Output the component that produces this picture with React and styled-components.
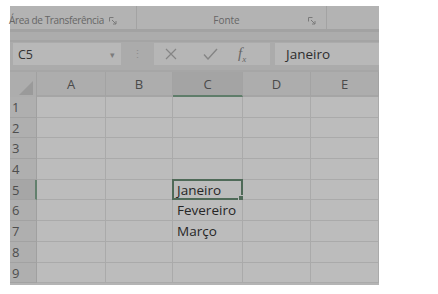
import React from 'react'
import styled, { createGlobalStyle } from 'styled-components'

const GlobalStyle = createGlobalStyle`
    body {
        margin: 0;
        background: #ffffff;
        font-family: "Open Sans", "Noto Sans", sans-serif;
    }
`;

const columns = ['A', 'B', 'C', 'D', 'E'];
const colWidths = [69, 67, 70, 68, 68];
const rows = [1, 2, 3, 4, 5, 6, 7, 8, 9];
const cells = { 5: 'Janeiro', 6: 'Fevereiro', 7: 'Março' };

const Launcher = () => (
    <svg width="8" height="8" viewBox="0 0 8 8">
        <path d="M0.5 0.5h4M0.5 0.5v4" stroke="#7a7a7a" strokeWidth="1" fill="none" />
        <path d="M3 3l4 4M7 4v3h-3" stroke="#7a7a7a" strokeWidth="1" fill="none" />
    </svg>
);

const App = () => {
    return (
        <>
            <GlobalStyle />
            <Window>
                <Ribbon>
                    <Group width={127}>
                        <GroupLabel>Área de Transferência</GroupLabel>
                        <Launcher />
                    </Group>
                    <Group width={190}>
                        <GroupLabel grow>Fonte</GroupLabel>
                        <Launcher />
                    </Group>
                </Ribbon>
                <RibbonBand />
                <FormulaBar>
                    <NameBox>
                        <span>C5</span>
                        <Caret>▾</Caret>
                    </NameBox>
                    <Grip>⋮</Grip>
                    <IconBox>
                        <svg width="12" height="12" viewBox="0 0 12 12">
                            <path d="M1 1l10 10M11 1l-10 10" stroke="#858585" strokeWidth="1.2" />
                        </svg>
                        <svg width="15" height="12" viewBox="0 0 15 12">
                            <path d="M1 6.5l4 4.5L14 1" stroke="#858585" strokeWidth="1.4" fill="none" />
                        </svg>
                        <Fx>f<sub>x</sub></Fx>
                    </IconBox>
                    <FormulaInput>Janeiro</FormulaInput>
                </FormulaBar>
                <Sheet>
                    <HeaderRow>
                        <Corner>
                            <svg width="14" height="14" viewBox="0 0 14 14">
                                <path d="M14 0V14H0Z" fill="#9a9a9a" />
                            </svg>
                        </Corner>
                        {columns.map((c, i) => (
                            <ColHeader key={c} width={colWidths[i]} selected={c === 'C'}>{c}</ColHeader>
                        ))}
                    </HeaderRow>
                    {rows.map(r => (
                        <Row key={r}>
                            <RowHeader selected={r === 5}>{r}</RowHeader>
                            {columns.map((c, i) => (
                                <Cell key={c} width={colWidths[i]}>
                                    {c === 'C' && cells[r]}
                                    {c === 'C' && r === 5 && <Selection><Handle /></Selection>}
                                </Cell>
                            ))}
                        </Row>
                    ))}
                </Sheet>
            </Window>
        </>
    )
}

const Window = styled.div`
    margin: 6px 0 0 10px;
    width: 369px;
    background: #b9b9b9;
`;

const Ribbon = styled.div`
    display: flex;
    height: 23px;
    background: #b3b3b3;
`;

const Group = styled.div`
    display: flex;
    align-items: center;
    gap: 5px;
    width: ${p => p.width}px;
    padding: 4px 10px 0 0;
    border-right: 1px solid #a3a3a3;
    box-sizing: border-box;
    svg { flex-shrink: 0; margin-top: 2px; }
`;

const GroupLabel = styled.span`
    font-size: 10px;
    color: #666666;
    white-space: nowrap;
    letter-spacing: -0.35px;
    margin-left: -1px;
    ${p => p.grow && 'flex: 1; text-align: center; padding-left: 14px; letter-spacing: 0;'}
`;

const RibbonBand = styled.div`
    height: 13px;
    box-sizing: border-box;
    background: #acacac;
    border-top: 3px solid #a2a2a2;
    border-bottom: 2px solid #a4a4a4;
`;

const FormulaBar = styled.div`
    display: flex;
    align-items: flex-start;
    height: 28px;
    padding-top: 1px;
    box-sizing: border-box;
    background: #ababab;
`;

const NameBox = styled.div`
    display: flex;
    align-items: center;
    justify-content: space-between;
    margin-left: 3px;
    width: 108px;
    height: 22px;
    padding: 0 6px 0 5px;
    box-sizing: border-box;
    background: #b8b8b8;
    font-size: 12.5px;
    color: #333333;
`;

const Caret = styled.span`
    font-size: 9px;
    color: #7c7c7c;
`;

const Grip = styled.div`
    width: 33px;
    text-align: center;
    line-height: 22px;
    font-size: 11px;
    color: #8e8e8e;
`;

const IconBox = styled.div`
    display: flex;
    align-items: center;
    gap: 26px;
    width: 116px;
    height: 22px;
    padding-left: 11px;
    box-sizing: border-box;
    background: #b6b6b6;
`;

const Fx = styled.span`
    font-family: "Liberation Serif", serif;
    font-style: italic;
    font-size: 15px;
    color: #666666;
    margin-left: -6px;
    sub { font-size: 9px; }
`;

const FormulaInput = styled.div`
    flex: 1;
    margin-left: 5px;
    height: 22px;
    line-height: 22px;
    padding-left: 11px;
    background: #b8b8b8;
    font-size: 13.5px;
    color: #2e2e2e;
`;

const Sheet = styled.div`
    display: flex;
    flex-direction: column;
    padding-bottom: 2px;
    background: #b4b4b4;
`;

const HeaderRow = styled.div`
    display: flex;
    height: 27px;
    background: #adadad;
    border-top: 2px solid #a6a6a6;
    box-sizing: border-box;
`;

const Corner = styled.div`
    width: 27px;
    display: flex;
    align-items: flex-end;
    justify-content: flex-end;
    padding: 0 3px 2px 0;
    box-sizing: border-box;
    border-right: 1px solid #a1a1a1;
`;

const ColHeader = styled.div`
    width: ${p => p.width}px;
    display: flex;
    align-items: center;
    justify-content: center;
    box-sizing: border-box;
    font-size: 13px;
    color: #4a4a4a;
    border-right: 1px solid #a3a3a3;
    background: ${p => p.selected ? '#a4a4a4' : 'transparent'};
    border-bottom: 2px solid ${p => p.selected ? '#5f7d6a' : '#a5a5a5'};
`;

const Row = styled.div`
    display: flex;
    height: 20.7px;
`;

const RowHeader = styled.div`
    width: 27px;
    box-sizing: border-box;
    padding-left: 2px;
    font-size: 13px;
    line-height: 20px;
    color: #4e4e4e;
    background: ${p => p.selected ? '#a6a6a6' : '#afafaf'};
    border-bottom: 1px solid #a2a2a2;
    border-right: ${p => p.selected ? '2px solid #62806d' : '1px solid #a0a0a0'};
`;

const Cell = styled.div`
    position: relative;
    width: ${p => p.width}px;
    box-sizing: border-box;
    padding-left: 4px;
    font-size: 13.5px;
    line-height: 20px;
    color: #262626;
    background: #bcbcbc;
    border-right: 1px solid #aaaaaa;
    border-bottom: 1px solid #aaaaaa;
    white-space: nowrap;
`;

const Selection = styled.div`
    position: absolute;
    left: -1px;
    top: -1px;
    right: -1px;
    bottom: -1px;
    border: 2px solid #4f6a58;
`;

const Handle = styled.div`
    position: absolute;
    right: -4px;
    bottom: -4px;
    width: 5px;
    height: 5px;
    background: #4f6a58;
    border: 1px solid #bcbcbc;
`;

export default App
